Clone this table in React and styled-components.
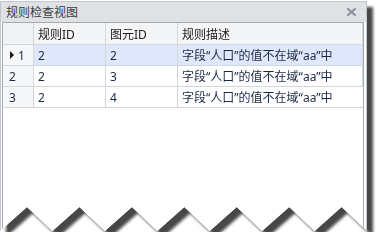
import styled, { createGlobalStyle } from 'styled-components'

const panelWidth = 367
const panelHeight = 231
const teeth = 7

// torn bottom edge: valleys at the bottom, peaks 24px higher
const tornEdge = (() => {
    const period = panelWidth / teeth
    const points = ['0px 0px', `${panelWidth}px 0px`]
    for (let i = teeth; i > 0; i--) {
        points.push(`${(i * period).toFixed(1)}px ${panelHeight - 1}px`)
        points.push(`${((i - 0.5) * period + 0.8).toFixed(1)}px ${panelHeight - 25}px`)
    }
    points.push(`0px ${panelHeight - 1}px`)
    return `polygon(${points.join(', ')})`
})()

const GlobalStyle = createGlobalStyle`
    body {
        margin: 0;
        background: #fff;
        font-family: "Noto Sans", "Noto Sans CJK SC", sans-serif;
    }
`

const Shadow = styled.div`
    display: inline-block;
    filter: drop-shadow(6px 6px 1.5px rgba(0, 0, 0, 0.72));
`

const Panel = styled.div`
    width: ${panelWidth}px;
    height: ${panelHeight}px;
    box-sizing: border-box;
    background: #fff;
    border: 1px solid #c3c7cf;
    border-bottom: none;
    clip-path: ${tornEdge};
    display: flex;
    flex-direction: column;
`

const TitleBar = styled.div`
    height: 20px;
    background: #dfe1e5;
    display: flex;
    align-items: center;
    justify-content: space-between;
    padding: 0 10px 0 5px;
    font-size: 12px;
    color: #3b3b3b;
`

const Body = styled.div`
    flex: 1;
    margin: 0 2px 0 1px;
    border: 1px solid #a4a9b3;
    border-bottom: none;
    background: #fff;
`

const Table = styled.div`
    display: grid;
    grid-template-columns: 31px 72px 72px 1fr;
`

const Cell = styled.div`
    height: ${props => props.header ? 22 : 21}px;
    box-sizing: border-box;
    border-right: 1px solid #d3d6dc;
    border-bottom: 1px solid #d3d6dc;
    display: flex;
    align-items: center;
    padding-left: 4px;
    font-size: 12px;
    white-space: nowrap;
    overflow: hidden;
    color: ${props => props.header ? '#202020' : '#1c2946'};
    background: ${props => props.header ? '#f4f5f7' : props.selected ? '#dee8fa' : '#fff'};

    &:last-child {
        border-right: none;
    }
`

const RowHead = styled(Cell)`
    background: ${props => props.header ? '#f1f2f4' : '#f6f7f9'};
    padding-left: ${props => props.current ? 7 : 6}px;
    gap: 4px;
    color: #1c2946;
`

const Arrow = styled.span`
    width: 0;
    height: 0;
    border-top: 4px solid transparent;
    border-bottom: 4px solid transparent;
    border-left: 4px solid #1a1a1a;
`

function CloseIcon() {
    return <svg width="9" height="8" viewBox="0 0 9 8" aria-hidden="true">
        <path d="M1 1 L8 7 M8 1 L1 7" stroke="#8a8e97" strokeWidth="2" strokeLinecap="square" />
    </svg>
}

const rows = [
    { id: 1, rule: 2, feature: 2, text: '字段“人口”的值不在域“aa”中' },
    { id: 2, rule: 2, feature: 3, text: '字段“人口”的值不在域“aa”中' },
    { id: 3, rule: 2, feature: 4, text: '字段“人口”的值不在域“aa”中' }
]

export default function App() {
    return <>
        <GlobalStyle />
        <Shadow>
            <Panel>
                <TitleBar>
                    <span>规则检查视图</span>
                    <CloseIcon />
                </TitleBar>
                <Body>
                    <Table>
                        <RowHead header />
                        <Cell header>规则ID</Cell>
                        <Cell header>图元ID</Cell>
                        <Cell header>规则描述</Cell>
                        {rows.map((row, i) => [
                            <RowHead key={'h' + row.id} current={i === 0}>
                                {i === 0 && <Arrow />}
                                {row.id}
                            </RowHead>,
                            <Cell key={'r' + row.id} selected={i === 0}>{row.rule}</Cell>,
                            <Cell key={'f' + row.id} selected={i === 0}>{row.feature}</Cell>,
                            <Cell key={'t' + row.id} selected={i === 0}>{row.text}</Cell>
                        ])}
                    </Table>
                </Body>
            </Panel>
        </Shadow>
    </>
}
